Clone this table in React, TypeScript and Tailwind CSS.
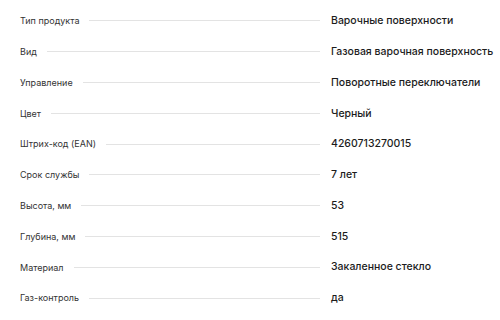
import React from "react";

const rows: [string, string][] = [
  ["Тип продукта", "Варочные поверхности"],
  ["Вид", "Газовая варочная поверхность"],
  ["Управление", "Поворотные переключатели"],
  ["Цвет", "Черный"],
  ["Штрих-код (EAN)", "4260713270015"],
  ["Срок службы", "7 лет"],
  ["Высота, мм", "53"],
  ["Глубина, мм", "515"],
  ["Материал", "Закаленное стекло"],
  ["Газ-контроль", "да"],
];

export default function App() {
  return (
    <div
      className="w-[500px] h-[320px] bg-white pt-[5.6px] pl-[20px] overflow-hidden"
      style={{ fontFamily: "Inter, 'Noto Sans', sans-serif" }}
    >
      {rows.map(([k, v]) => (
        <div key={k} className="flex items-center h-[30.8px]">
          <div className="flex items-center w-[300px] shrink-0">
            <span className="text-[9px] text-[#333333] whitespace-nowrap">{k}</span>
            <div className="flex-1 h-px bg-[#e3e3e3] ml-[10px]" />
          </div>
          <span className="ml-[11px] text-[10.5px] font-medium text-[#1c1c1c] whitespace-nowrap">{v}</span>
        </div>
      ))}
    </div>
  );
}
